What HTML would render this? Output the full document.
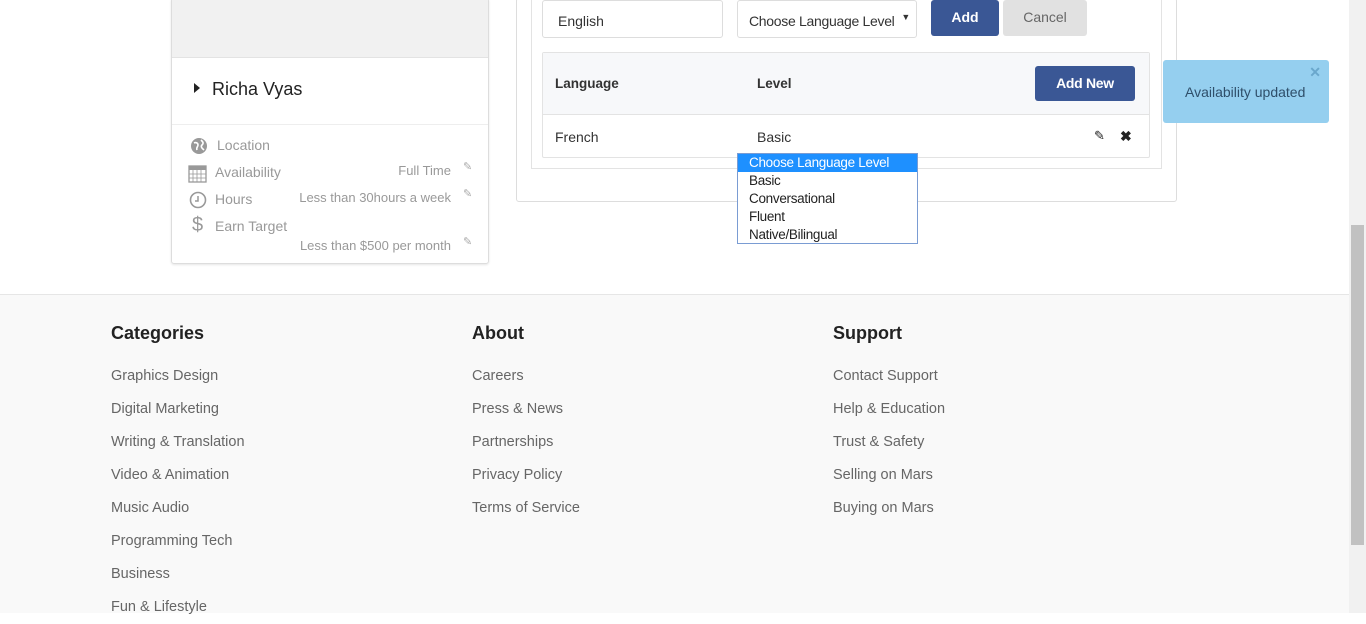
<!DOCTYPE html>
<html><head><style>
*{margin:0;padding:0;box-sizing:border-box}
body{width:1366px;height:613px;overflow:hidden;background:#fff;font-family:"Liberation Sans",sans-serif;position:relative;color:#333}
.a{position:absolute;white-space:nowrap}
.ft{position:absolute;left:0;top:294px;width:1349px;height:319px;background:#f9f9f9;border-top:1px solid #e6e6e6}
.h{font-size:18px;font-weight:bold;color:#222}
.l{font-size:14.5px;color:#666}
.g{font-size:13px;color:#999}
.pen{font-size:11px;color:#aaa}
</style></head><body>
<div class="a" style="left:171px;top:-2px;width:318px;height:266px;border:1px solid #ddd;border-radius:3px;box-shadow:0 1px 2px rgba(0,0,0,.1)"></div>
<div class="a" style="left:172px;top:0;width:316px;height:58px;background:#f1f1f1;border-bottom:1px solid #e3e3e3"></div>
<div class="a" style="left:172px;top:124px;width:316px;height:1px;background:#eee"></div>
<div class="a" style="left:194px;top:83px;width:0;height:0;border-top:5px solid transparent;border-bottom:5px solid transparent;border-left:6px solid #222"></div>
<div class="a" style="left:212px;top:79px;font-size:18px;color:#222">Richa Vyas</div>
<svg class="a" style="left:190px;top:137px" width="18" height="18"><circle cx="9" cy="9" r="8" fill="#999"/><path d="M4 6c2-1 4 0 4 2s-2 2-1 5M11 3c2 2 3 3 1 5s1 4 2 5" stroke="#fff" stroke-width="1.6" fill="none"/></svg>
<div class="a g" style="left:217px;top:137px;font-size:14px">Location</div>
<svg class="a" style="left:188px;top:163px" width="20" height="20"><rect x="1" y="3" width="17" height="16" fill="none" stroke="#999" stroke-width="1.3"/><rect x="1" y="3" width="17" height="4" fill="#999"/><path d="M1 11h17M1 15h17M5 7v12M9 7v12M13 7v12" stroke="#999" stroke-width=".8"/></svg>
<div class="a g" style="left:215px;top:164px;font-size:14px">Availability</div>
<svg class="a" style="left:189px;top:191px" width="18" height="18"><circle cx="9" cy="9" r="7.5" fill="none" stroke="#999" stroke-width="1.6"/><path d="M9 5v5H6" stroke="#999" stroke-width="1.5" fill="none"/></svg>
<div class="a g" style="left:215px;top:191px;font-size:14px">Hours</div>
<div class="a" style="left:192px;top:214px;font-size:20px;color:#999">$</div>
<div class="a g" style="left:215px;top:218px;font-size:14px">Earn Target</div>
<div class="a g" style="right:915px;top:163px">Full Time</div>
<div class="a g" style="right:915px;top:190px">Less than 30hours a week</div>
<div class="a g" style="right:915px;top:238px">Less than $500 per month</div>
<div class="a pen" style="left:463px;top:160px">✎</div>
<div class="a pen" style="left:463px;top:187px">✎</div>
<div class="a pen" style="left:463px;top:235px">✎</div>
<div class="a" style="left:516px;top:-2px;width:661px;height:204px;border:1px solid #ddd;border-radius:3px"></div>
<div class="a" style="left:531px;top:-2px;width:631px;height:171px;border:1px solid #e3e3e3"></div>
<div class="a" style="left:542px;top:0;width:181px;height:38px;border:1px solid #ddd;border-radius:3px;font-size:14px;color:#333;padding:12px 0 0 15px">English</div>
<div class="a" style="left:737px;top:0;width:180px;height:38px;border:1px solid #ddd;border-radius:3px;font-size:14px;color:#333;padding:12px 0 0 11px;letter-spacing:-.3px">Choose Language Level<span style="position:absolute;right:6px;top:11px;font-size:9px">▼</span></div>
<div class="a" style="left:931px;top:0;width:68px;height:36px;background:#3a5795;border-radius:3px;color:#fff;font-weight:bold;font-size:14px;text-align:center;line-height:34px">Add</div>
<div class="a" style="left:1003px;top:0;width:84px;height:36px;background:#e1e1e1;border-radius:3px;color:#666;font-size:14px;text-align:center;line-height:34px">Cancel</div>
<div class="a" style="left:542px;top:52px;width:608px;height:106px;border:1px solid #e3e3e3;border-radius:2px"></div>
<div class="a" style="left:543px;top:53px;width:606px;height:62px;background:#f7f8fa;border-bottom:1px solid #e3e3e3"></div>
<div class="a" style="left:555px;top:76px;font-size:13.5px;font-weight:bold;color:#333">Language</div>
<div class="a" style="left:757px;top:76px;font-size:13.5px;font-weight:bold;color:#333">Level</div>
<div class="a" style="left:1035px;top:66px;width:100px;height:35px;background:#3a5795;border-radius:3px;color:#fff;font-weight:bold;font-size:14px;text-align:center;line-height:35px;letter-spacing:-.3px">Add New</div>
<div class="a" style="left:555px;top:129px;font-size:14px;color:#333">French</div>
<div class="a" style="left:757px;top:129px;font-size:14px;color:#333">Basic</div>
<div class="a" style="left:1094px;top:128px;font-size:13px;color:#222">✎</div>
<div class="a" style="left:1120px;top:128px;font-size:14px;font-weight:bold;color:#222">✖</div>
<div class="a" style="left:737px;top:153px;width:181px;height:91px;background:#fff;border:1px solid #7a9cd3;font-size:13.5px;color:#222;letter-spacing:-.3px">
<div style="background:#1e90ff;color:#fff;height:18px;padding-left:11px;line-height:18px">Choose Language Level</div>
<div style="height:18px;padding-left:11px;line-height:18px">Basic</div>
<div style="height:18px;padding-left:11px;line-height:18px">Conversational</div>
<div style="height:18px;padding-left:11px;line-height:18px">Fluent</div>
<div style="height:18px;padding-left:11px;line-height:18px">Native/Bilingual</div>
</div>
<div class="a" style="left:1163px;top:60px;width:166px;height:63px;background:#95cfef;border-radius:3px;color:#2f4f6a;font-size:14px;padding:24px 0 0 22px">Availability updated<span style="position:absolute;right:8px;top:4px;color:#6aa7cc;font-weight:bold;font-size:14px">✕</span></div>
<div class="ft"></div>
<div class="a h" style="left:111px;top:323px">Categories</div>
<div class="a h" style="left:472px;top:323px">About</div>
<div class="a h" style="left:833px;top:323px">Support</div>
<div class="a l" style="left:111px;top:360px;line-height:33px">Graphics Design<br>Digital Marketing<br>Writing &amp; Translation<br>Video &amp; Animation<br>Music Audio<br>Programming Tech<br>Business<br>Fun &amp; Lifestyle</div>
<div class="a l" style="left:472px;top:360px;line-height:33px">Careers<br>Press &amp; News<br>Partnerships<br>Privacy Policy<br>Terms of Service</div>
<div class="a l" style="left:833px;top:360px;line-height:33px">Contact Support<br>Help &amp; Education<br>Trust &amp; Safety<br>Selling on Mars<br>Buying on Mars</div>
<div class="a" style="left:1349px;top:0;width:17px;height:613px;background:#f1f1f1"></div>
<div class="a" style="left:1351px;top:225px;width:13px;height:320px;background:#c1c1c1"></div>
</body></html>
